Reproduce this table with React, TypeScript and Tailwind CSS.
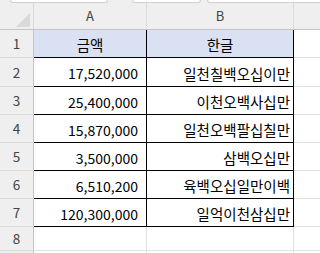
const rows = [
  { n: "17,520,000", k: "일천칠백오십이만", h: "h-[29px]" },
  { n: "25,400,000", k: "이천오백사십만", h: "h-[28px]" },
  { n: "15,870,000", k: "일천오백팔십칠만", h: "h-[28px]" },
  { n: "3,500,000", k: "삼백오십만", h: "h-[28px]" },
  { n: "6,510,200", k: "육백오십일만이백", h: "h-[28px]" },
  { n: "120,300,000", k: "일억이천삼십만", h: "h-[28px]" },
];

const font = { fontFamily: '"Noto Sans CJK KR", "Noto Sans", sans-serif' };

function RowHead({ label }: { label: string }) {
  return (
    <div className="w-[34px] shrink-0 flex items-center justify-center bg-[#efefef] border-r border-r-[#c4c4c4] border-b border-b-[#dadada] text-[13.5px] text-[#444]">
      {label}
    </div>
  );
}

export default function App() {
  return (
    <div className="w-[320px] h-[253px] overflow-hidden bg-white text-black" style={font}>
      {/* formula bar edge */}
      <div className="flex h-[3px] bg-[#efefef]">
        <div className="ml-[10px] w-[98px] bg-white border-b border-x border-[#d0d0d0] rounded-b-[3px]" />
        <div className="ml-[24px] w-[69px] bg-white border-b border-x border-[#d0d0d0] rounded-b-[3px]" />
        <div className="ml-[6px] flex-1 bg-white border-b border-l border-[#d0d0d0] rounded-bl-[3px]" />
      </div>

      {/* column headers */}
      <div className="flex h-[27px] bg-[#efefef] border-b border-[#c4c4c4]">
        <div className="w-[34px] shrink-0 relative border-r border-[#dadada]">
          <div className="absolute right-[3px] bottom-[2px] w-0 h-0 border-l-[14px] border-l-transparent border-b-[14px] border-b-[#d9d9d9]" />
        </div>
        <div className="w-[113px] shrink-0 flex items-center justify-center border-r border-[#dadada] text-[13px] text-[#444]">A</div>
        <div className="w-[147px] shrink-0 flex items-center justify-center border-r border-[#dadada] text-[13px] text-[#444]">B</div>
        <div className="flex-1" />
      </div>

      {/* row 1 */}
      <div className="flex h-[28px]">
        <RowHead label="1" />
        <div className="w-[113px] shrink-0 flex items-center justify-center bg-[#d9e1f2] border-r border-b border-black text-[14.5px] pt-[3px]">금액</div>
        <div className="w-[147px] shrink-0 flex items-center justify-center bg-[#d9e1f2] border-r border-b border-black text-[14.5px] pt-[3px]">한글</div>
        <div className="flex-1 border-b border-[#e1e1e1]" />
      </div>

      {rows.map((r, i) => (
        <div key={i} className={`flex ${r.h}`}>
          <RowHead label={String(i + 2)} />
          <div className="w-[113px] shrink-0 flex items-center justify-end pr-[8px] pt-[3px] border-r border-b border-black text-[14px]">
            {r.n}
          </div>
          <div className="w-[147px] shrink-0 flex items-center justify-end pr-[3px] pt-[3px] border-r border-b border-black text-[14.5px]">
            {r.k}
          </div>
          <div className="flex-1 border-b border-[#e1e1e1]" />
        </div>
      ))}

      {/* row 8 */}
      <div className="flex h-[24px]">
        <RowHead label="8" />
        <div className="w-[113px] shrink-0 border-r border-b border-[#e1e1e1]" />
        <div className="w-[147px] shrink-0 border-r border-b border-[#e1e1e1]" />
        <div className="flex-1 border-b border-[#e1e1e1]" />
      </div>
      <div className="flex h-[10px]">
        <div className="w-[34px] shrink-0 bg-[#efefef] border-r border-[#c4c4c4]" />
        <div className="w-[113px] shrink-0 border-r border-[#e1e1e1]" />
        <div className="w-[147px] shrink-0 border-r border-[#e1e1e1]" />
      </div>
    </div>
  );
}
